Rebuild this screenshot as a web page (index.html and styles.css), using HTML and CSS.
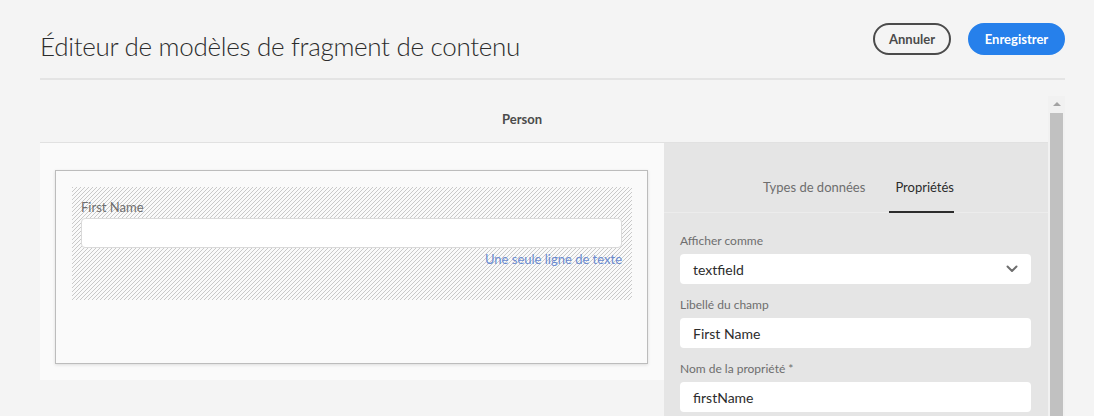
FILE: index.html
```html
<!DOCTYPE html>
<html lang="fr">
<head>
<meta charset="utf-8">
<title>Éditeur de modèles de fragment de contenu</title>
<link rel="stylesheet" href="styles.css">
</head>
<body>
<div class="page">
  <header class="header">
    <h1 class="title">Éditeur de modèles de fragment de contenu</h1>
    <div class="actions">
      <button class="btn btn-quiet">Annuler</button>
      <button class="btn btn-cta">Enregistrer</button>
    </div>
  </header>
  <main class="main">
    <section class="panel">
      <div class="panel-head">Person</div>
      <div class="panel-body">
        <div class="canvas">
          <div class="card">
            <div class="hatch">
              <div class="field-label">First Name</div>
              <div class="preview-input"></div>
              <div class="hint">Une seule ligne de texte</div>
            </div>
          </div>
        </div>
        <aside class="side">
          <nav class="tabs">
            <div class="tab">Types de données</div>
            <div class="tab tab-active">Propriétés</div>
          </nav>
          <div class="form">
            <label class="lbl">Afficher comme</label>
            <div class="input select">
              <span>textfield</span>
              <svg class="chev" width="12" height="8" viewBox="0 0 12 8"><path d="M1.5 1.5 L6 6 L10.5 1.5" fill="none" stroke="#6e6e6e" stroke-width="2" stroke-linecap="round" stroke-linejoin="round"/></svg>
            </div>
            <label class="lbl">Libellé du champ</label>
            <div class="input">First Name</div>
            <label class="lbl">Nom de la propriété *</label>
            <div class="input">firstName</div>
          </div>
        </aside>
      </div>
    </section>
    <div class="scrollbar">
      <div class="sb-arrow"></div>
      <div class="sb-thumb"></div>
    </div>
  </main>
</div>
</body>
</html>
```

FILE: styles.css
```css
* { box-sizing: border-box; }
html, body { margin: 0; padding: 0; }
body {
  background: #f4f4f4;
  font-family: Lato, "Open Sans", sans-serif;
  color: #2c2c2c;
  height: 416px;
  overflow: hidden;
}
.page { padding: 0 29px 0 40px; }
.header {
  height: 80px;
  padding-top: 14px;
  display: flex;
  align-items: center;
  justify-content: space-between;
  border-bottom: 2px solid #e4e4e4;
}
.title {
  margin: 0;
  font-weight: 300;
  font-size: 26px;
  color: #2c2c2c;
  letter-spacing: -0.3px;
}
.actions { display: flex; gap: 17px; margin-bottom: 14px; }
.btn {
  height: 32px;
  border-radius: 16px;
  font-family: inherit;
  font-weight: 700;
  font-size: 13px;
  padding: 0 12px;
}
.btn-quiet {
  width: 78px;
  background: transparent;
  border: 2px solid #4b4b4b;
  color: #4b4b4b;
}
.btn-cta {
  width: 97px;
  background: #2680eb;
  border: 2px solid #2680eb;
  color: #fff;
}
.main { display: flex; margin-top: 16px; }
.panel { flex: 1; }
.panel-head {
  height: 47px;
  display: flex;
  align-items: center;
  justify-content: center;
  padding-right: 44px;
  font-weight: 700;
  font-size: 13px;
  color: #4b4b4b;
  border-bottom: 1px solid #e1e1e1;
}
.panel-body { display: flex; align-items: flex-start; }
.canvas {
  width: 624px;
  height: 237px;
  background: #fafafa;
  padding: 27px 16px 0 15px;
}
.card {
  height: 194px;
  border: 1px solid #bcbcbc;
  background: #fafafa;
  box-shadow: 0 1px 3px rgba(0,0,0,0.12);
  padding: 16px 15px 0 16px;
}
.hatch {
  height: 113px;
  padding: 12px 10px 0 9px;
  background-image: linear-gradient(135deg, #c9c9c9 0 12.5%, transparent 12.5% 50%, #c9c9c9 50% 62.5%, transparent 62.5% 100%);
  background-size: 4px 4px;
}
.field-label {
  font-size: 13px;
  line-height: 16px;
  color: #6e6e6e;
  margin-bottom: 3px;
}
.preview-input {
  height: 30px;
  background: #fff;
  border: 1px solid #dadada;
  border-radius: 4px;
}
.hint {
  text-align: right;
  font-size: 13px;
  line-height: 16px;
  margin-top: 3px;
  color: #6a8bd1;
}
.side {
  flex: 1;
  height: 280px;
  background: #e5e5e5;
}
.tabs {
  height: 70px;
  display: flex;
  justify-content: center;
  gap: 24px;
  padding-left: 5px;
  border-bottom: 1px solid #ececec;
}
.tab {
  display: flex;
  align-items: center;
  padding-top: 20px;
  font-size: 13px;
  color: #6e6e6e;
  border-bottom: 2px solid transparent;
}
.tab-active {
  padding-left: 6px;
  color: #2c2c2c;
  border-bottom-color: #2c2c2c;
  margin-bottom: -1px;
}
.form {
  padding: 20px 17px 0 16px;
  display: flex;
  flex-direction: column;
}
.lbl {
  font-size: 12px;
  line-height: 16px;
  color: #6e6e6e;
  margin-bottom: 5px;
}
.input {
  height: 30px;
  background: #fff;
  border-radius: 4px;
  padding: 0 12px 0 13px;
  display: flex;
  align-items: center;
  font-size: 14px;
  color: #2c2c2c;
  margin-bottom: 13px;
}
.select { justify-content: space-between; }
.chev { margin-right: 1px; }
.scrollbar {
  width: 17px;
  height: 320px;
  background: #f1f1f1;
  display: flex;
  flex-direction: column;
  align-items: center;
}
.sb-arrow {
  margin-top: 6px;
  width: 0; height: 0;
  border-left: 4px solid transparent;
  border-right: 4px solid transparent;
  border-bottom: 4px solid #a3a3a3;
}
.sb-thumb {
  margin-top: 7px;
  width: 13px;
  flex: 1;
  background: #c1c1c1;
}
```
